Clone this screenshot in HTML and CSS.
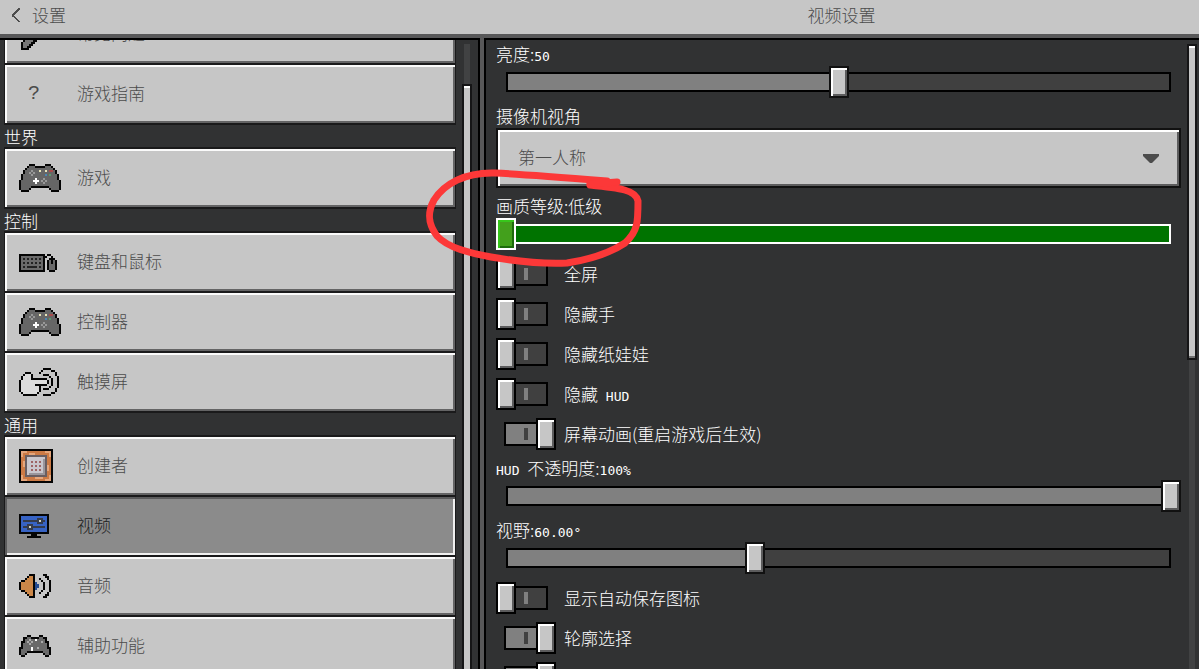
FILE: index.html
```html
<!DOCTYPE html>
<html lang="zh-CN">
<head>
<meta charset="utf-8">
<meta name="viewport" content="width=device-width, initial-scale=1">
<title>视频设置</title>
<link rel="stylesheet" href="styles.css">
</head>
<body>
<svg class="defs" aria-hidden="true">
  <symbol id="pad" viewBox="0 0 21 14">
    <path fill="#050505" d="M5 0h3v1h5V0h3v1h1v1h1v1h1v2h1v3h1v5h-1v1h-4v-1h-1v-1H6v1H5v1H1v-1H0V8h1V5h1V3h1V2h1V1h1z"/>
    <path fill="#666" d="M5 1h3v1h5V1h3v1h1v1h1v2h1v3h1v5h-4v-1h-1v-1H6v1H5v1H1V8h1V5h1V3h1V2h1z"/>
    <path fill="#999" d="M6 3h1v1H6zM5 4h1v1H5zM7 4h1v1H7zM6 5h1v1H6zM12 7h1v1h-1zM11 8h1v1h-1zM13 8h1v1h-1zM12 9h1v1h-1z"/>
    <path fill="#fff" d="M8 7h1v1h1v1H9v1H8V9H7V8h1z"/>
    <path fill="#e8e4b8" d="M10 3h1v1h-1zM13 3h1v1h-1z"/>
    <path fill="#a84a4a" d="M15 3h2v1h-2z"/>
    <path fill="#4a86b4" d="M13 5h1v1h-1z"/>
    <path fill="#5a9a6a" d="M15 5h1v1h-1z"/>
  </symbol>
</svg>

<header class="topbar">
  <button class="back" type="button">
    <svg width="10" height="14" viewBox="0 0 10 14" aria-hidden="true"><path d="M8 0h2v2H9v1H8v1H7v1H6v1H5v1H4v1h1v1h1v1h1v1h1v1h1v1h1v1H8v-1H7v-1H6v-1H5v-1H4v-1H3V9H2V6h1V5h1V4h1V3h1V2h1V1h1z" fill="#4c4c4c"/></svg>
    <span>设置</span>
  </button>
  <h1 class="title">视频设置</h1>
</header>

<div class="panels">
  <nav class="sidebar">
    <div class="menu">
      <button class="item" type="button">
        <svg class="icon" width="36" height="36" viewBox="0 0 18 18" aria-hidden="true"><path fill="#050505" d="M1 17v-4h1v-2h1v-2h13v1h-4v1h-2v1H9v1H8v1H7v1H6v1H5v1z"/><path fill="#777" d="M2 16v-3h1v-2h1v-1h4v2H7v1H6v1H5v1H4v1z"/></svg>
        <span>常见问题</span>
      </button>
      <button class="item" type="button"><span class="icon mark">?</span><span>游戏指南</span></button>

      <h2 class="section">世界</h2>
      <button class="item" type="button"><svg class="icon" width="42" height="28" aria-hidden="true"><use href="#pad"/></svg><span>游戏</span></button>

      <h2 class="section">控制</h2>
      <button class="item" type="button">
        <svg class="icon" width="38" height="20" viewBox="0 0 19 10" aria-hidden="true">
          <path fill="#050505" d="M0 1h13v9H0z"/><path fill="#6a6a6a" d="M1 2h11v7H1z"/>
          <path fill="#222" d="M2 3h1v1H2zM4 3h1v1H4zM6 3h1v1H6zM8 3h1v1H8zM10 3h1v1h-1zM2 5h1v1H2zM4 5h1v1H4zM6 5h1v1H6zM8 5h1v1H8zM10 5h1v1h-1zM2 7h1v1H2zM4 7h5v1H4zM10 7h1v1h-1z"/>
          <path fill="#050505" d="M13 2h1V1h2v1h1v1h1v1h1v5h-1v1h-3V9h-1V4h1V3h1V2h-2v1h-1z"/><path fill="#6a6a6a" d="M15 4h1v2h1V4h1v5h-3z"/>
        </svg>
        <span>键盘和鼠标</span>
      </button>
      <button class="item" type="button"><svg class="icon" width="42" height="28" aria-hidden="true"><use href="#pad"/></svg><span>控制器</span></button>
      <button class="item" type="button">
        <svg class="icon" width="40" height="28" viewBox="0 0 20 14" aria-hidden="true">
          <path fill="#050505" d="M3 2h3v1h1v2h7v1h1v2h-1v1h-3v3h-1v1H9v1H2v-1H1v-1H0V6h1V4h1V3h1z"/>
          <path fill="#dcdcdc" d="M3 3h3v3h8v2H8v1h2v3H9v1H2v-1H1V6h1V4h1z"/>
          <path fill="#050505" d="M10 2h1V1h1V0h4v1h2v1h1v2h1v6h-1v2h-1v1h-2v1h-4v-1h4v-1h2v-2h1V4h-1V2h-2V1h-4v1h-1v1h-1zM12 3h3v1h1v1h1v4h-1v1h-1v1h-3v-1h3V9h1V5h-1V4h-3z"/>
        </svg>
        <span>触摸屏</span>
      </button>

      <h2 class="section">通用</h2>
      <button class="item" type="button">
        <svg class="icon" width="34" height="34" viewBox="0 0 17 17" aria-hidden="true">
          <path fill="#050505" d="M0 0h17v17H0z"/><path fill="#cc7a45" d="M1 1h15v15H1z"/>
          <path fill="#e5a67c" d="M1 1h3v1H2v2H1zM13 1h3v3h-1V2h-2zM1 13h1v2h2v1H1zM15 13h1v3h-3v-1h2zM5 2h3v1H5zM2 6h1v3H2zM14 8h1v3h-1zM8 14h4v1H8z"/>
          <path fill="#695e61" d="M3 3h11v11H3z"/><path fill="#c9c6cc" d="M4 4h9v9H4z"/><path fill="#9a969c" d="M12 5h1v8H5v-1h7z"/>
          <path fill="#9d6464" d="M6 6h1v1H6zM8 6h1v1H8zM10 6h1v1h-1zM6 8h1v1H6zM8 8h1v1H8zM10 8h1v1h-1zM6 10h1v1H6zM8 10h1v1H8zM10 10h1v1h-1z"/>
        </svg>
        <span>创建者</span>
      </button>
      <button class="item current" type="button" aria-current="page">
        <svg class="icon" width="30" height="24" viewBox="0 0 15 12" aria-hidden="true">
          <path fill="#050505" d="M0 0h15v10H9v1h2v1H4v-1h2v-1H0z"/><path fill="#3763c4" d="M1 1h13v8H1z"/>
          <path fill="#353c4c" d="M2 3h7V2h3v1h1v1h-1v1H9V4H2zM2 6h2V5h3v1h6v1H7v1H4V7H2z"/><path fill="#d4d4c4" d="M10 3h1v1h-1zM5 6h1v1H5z"/>
        </svg>
        <span>视频</span>
      </button>
      <button class="item" type="button">
        <svg class="icon" width="32" height="24" viewBox="0 0 16 12" aria-hidden="true">
          <path fill="#050505" d="M5 0h3v12H5v-1H4v-1H3V9H1V8H0V4h1V3h2V2h1V1h1z"/><path fill="#cc8748" d="M5 1h2v10H5v-1H4V9H3V8H1V4h2V3h1V2h1z"/><path fill="#244b91" d="M8 4h1v1h1v2H9v1H8z"/>
          <path fill="#050505" d="M10 2h1v1h1v1h1v4h-1v1h-1v1h-1V9h1V8h1V4h-1V3h-1zM12 0h2v1h1v2h1v6h-1v2h-1v1h-2v-1h1v-1h1V9h1V3h-1V2h-1V1h-1z"/>
        </svg>
        <span>音频</span>
      </button>
      <button class="item" type="button">
        <svg class="icon" width="32" height="22" viewBox="0 0 16 11" aria-hidden="true">
          <path fill="#050505" d="M4 0h2v1h4V0h2v1h2v2h1v3h1v4h-1v1h-2v-1h-1V9H4v1H3v1H1v-1H0V6h1V3h1V1h2z"/><path fill="#6a6a6a" d="M4 1h2v1h4V1h2v1h1v2h1v3h1v3h-2V9h-1V8H4v1H3v1H1V7h1V4h1V2h1z"/>
          <path fill="#aaa" d="M5 2h1v1H5zM4 3h1v1H4zM6 3h1v1H6zM5 4h1v1H5zM9 6h1v1H9zM11 3h1v1h-1z"/><path fill="#fff" d="M6 6h1v2H6zM8 2h1v1H8z"/>
        </svg>
        <span>辅助功能</span>
      </button>
    </div>
    <div class="scroll scroll-menu"><div class="scroll-thumb"></div></div>
  </nav>

  <main class="content">
    <form class="settings">
      <div class="field">
        <label for="brightness">亮度:<span class="latin">50</span></label>
        <div class="slider"><div class="bar"><div class="fill" style="width:50%"></div></div><input id="brightness" type="range" min="0" max="100" value="50"></div>
      </div>
      <div class="field">
        <label for="camera">摄像机视角</label>
        <div class="dropdown">
          <select id="camera"><option>第一人称</option></select>
          <svg class="arrow" width="16" height="9" viewBox="0 0 16 9" aria-hidden="true"><path fill="#4c4c4c" d="M0 0h16v2L9 9H7L0 2z"/></svg>
        </div>
      </div>
      <div class="field active">
        <label for="quality">画质等级:低级</label>
        <div class="slider"><div class="bar"></div><input id="quality" type="range" min="0" max="3" value="0"></div>
      </div>
      <label class="toggle"><input type="checkbox"><span>全屏</span></label>
      <label class="toggle"><input type="checkbox"><span>隐藏手</span></label>
      <label class="toggle"><input type="checkbox"><span>隐藏纸娃娃</span></label>
      <label class="toggle"><input type="checkbox"><span>隐藏<span class="latin"> HUD</span></span></label>
      <label class="toggle"><input type="checkbox" checked><span>屏幕动画(重启游戏后生效)</span></label>
      <div class="field">
        <label for="opacity"><span class="latin">HUD </span>不透明度:<span class="latin">100%</span></label>
        <div class="slider"><div class="bar"><div class="fill" style="width:100%"></div></div><input id="opacity" type="range" min="0" max="100" value="100"></div>
      </div>
      <div class="field">
        <label for="fov">视野:<span class="latin">60.00°</span></label>
        <div class="slider"><div class="bar"><div class="fill" style="width:37.5%"></div></div><input id="fov" type="range" min="30" max="110" value="60"></div>
      </div>
      <label class="toggle"><input type="checkbox"><span>显示自动保存图标</span></label>
      <label class="toggle"><input type="checkbox" checked><span>轮廓选择</span></label>
      <label class="toggle"><input type="checkbox" checked></label>
    </form>
    <div class="scroll scroll-content"><div class="scroll-thumb"></div></div>

    <svg class="scribble" width="220" height="100" viewBox="424 168 220 100" aria-hidden="true">
      <path d="M607 181C570 178 520 174 495 173C465 172 444 184 434 200C427 213 428 224 437 236C448 248 470 253 491 257C520 262 545 264 567 263C587 260 610 253 625 243C638 231 638 222 638 201C636 190 620 188 590 185"/>
      <path d="M590 184L617 182"/>
    </svg>
  </main>
</div>
</body>
</html>
```

FILE: styles.css
```css
*, *::before, *::after { box-sizing: border-box; }

body {
  margin: 0;
  height: 100vh;
  overflow: hidden;
  display: flex;
  flex-direction: column;
  background: #585859;
  color: #fff;
  font: 300 17px/20px "Noto Sans CJK SC", sans-serif;
}

button, select { font: inherit; }
h1, h2 { margin: 0; font: inherit; }
.defs { position: absolute; width: 0; height: 0; }

.topbar {
  display: grid;
  grid-template-columns: 484px 1fr;
  align-items: center;
  flex: none;
  height: 34px;
  padding-bottom: 4px;
  background: #c6c6c6;
  color: #4c4c4c;
}
.back {
  display: flex;
  align-items: center;
  gap: 12px;
  padding: 0 0 0 10px;
  border: 0;
  background: none;
  color: inherit;
}
.title { text-align: center; }

.panels {
  flex: 1;
  min-height: 0;
  display: grid;
  grid-template-columns: 480px 1fr;
  gap: 4px;
  margin-top: 4px;
}
.sidebar, .content {
  display: flex;
  gap: 6px;
  min-height: 0;
  background: #313233;
  border-top: 2px solid #000;
}
.sidebar { overflow: hidden; border-right: 2px solid #000; padding: 0 6px 0 4px; }
.content { position: relative; border-left: 2px solid #000; padding: 0 2px 0 10px; }

.menu { flex: 1; margin-top: -37px; }
.item {
  display: grid;
  grid-template-columns: 58px 1fr;
  align-items: center;
  width: 100%;
  height: 62px;
  padding: 0 14px;
  border: solid #1a1a1b;
  border-width: 2px 1px;
  background: #c6c6c6;
  box-shadow: inset 2px 2px #fafafa, inset -2px -2px #646465;
  color: #4c4c4c;
  text-align: left;
}
.item + .item { margin-top: -2px; }
.item > :last-child { padding-bottom: 2px; }
.item.current {
  background: #8b8b8b;
  color: #1e1e1f;
  box-shadow: inset 2px 2px #5c5c5d, inset -2px -2px #f0f0f0;
}
.mark {
  width: 30px;
  text-align: center;
  font: 20px/20px "Liberation Mono", monospace;
}
.section { padding-top: 2px; }

.scroll { flex: none; width: 10px; margin-top: 4px; padding: 0 2px; background: #414243; background-clip: content-box; }
.scroll-thumb {
  height: 316px;
  margin: 0 -2px;
  border: 2px solid #151516;
  background: #c6c6c6;
  box-shadow: inset 0 2px #fff, inset 0 -2px #707070;
}
.scroll-menu .scroll-thumb { height: 100%; margin-top: 40px; }

.settings {
  flex: 1;
  min-width: 0;
  height: 100%;
  overflow: hidden;
  display: flex;
  flex-direction: column;
  gap: 8px;
  padding-top: 4px;
}
.settings > * { flex: none; }
.field > label { display: block; padding-bottom: 2px; }
.latin { font: 13px/1 "DejaVu Sans Mono", monospace; white-space: pre; }

.slider { display: grid; align-items: center; }
.slider > * { grid-area: 1 / 1; }
.bar { height: 20px; margin: 0 10px; border: 2px solid #000; background: #404040; }
.fill { height: 100%; background: #808080; }
.active .bar { border-color: #fff; background: #007300; }

input { appearance: none; -webkit-appearance: none; margin: 0; }
input[type="range"] { width: 100%; height: 32px; background: none; }
input[type="range"]::-webkit-slider-thumb {
  -webkit-appearance: none;
  width: 20px;
  height: 32px;
  border: 2px solid #111;
  background: #c6c6c6;
  box-shadow: inset 2px 2px #fff, inset -2px -2px #5c5c5d;
}
.active input[type="range"]::-webkit-slider-thumb {
  border-color: #fff;
  background: #43a01c;
  box-shadow: inset 2px 2px #37c61b, inset -2px -2px #1d6b0b;
}

.dropdown { display: grid; align-items: center; }
.dropdown > * { grid-area: 1 / 1; }
.dropdown select {
  appearance: none;
  width: 100%;
  height: 60px;
  padding: 0 20px 2px;
  border: 2px solid #111;
  border-radius: 0;
  background: #c6c6c6;
  box-shadow: inset 2px 2px #fff, inset -2px -2px #5c5c5d;
  color: #4c4c4c;
}
.arrow { justify-self: end; margin-right: 22px; pointer-events: none; }

.toggle { display: flex; align-items: center; gap: 8px; }
.toggle input { display: grid; align-items: center; width: 60px; height: 32px; }
.toggle input::before, .toggle input::after { content: ""; grid-area: 1 / 1; }
.toggle input::before {
  height: 24px;
  margin: 0 8px;
  border: 2px solid #000;
  background: linear-gradient(#808080, #808080) 18px 4px / 4px 12px no-repeat #404040;
}
.toggle input::after {
  width: 20px;
  height: 32px;
  border: 2px solid #000;
  background: #c6c6c6;
  box-shadow: inset 2px 2px #fff, inset -2px -2px #5c5c5d;
}
.toggle input:checked::before {
  background: linear-gradient(#404040, #404040) 18px 4px / 4px 12px no-repeat #808080;
}
.toggle input:checked::after { justify-self: end; }

.scribble {
  position: absolute;
  left: -62px;
  top: 128px;
  fill: none;
  stroke: #fc3838;
  stroke-width: 7;
  stroke-linecap: round;
  pointer-events: none;
}
```
